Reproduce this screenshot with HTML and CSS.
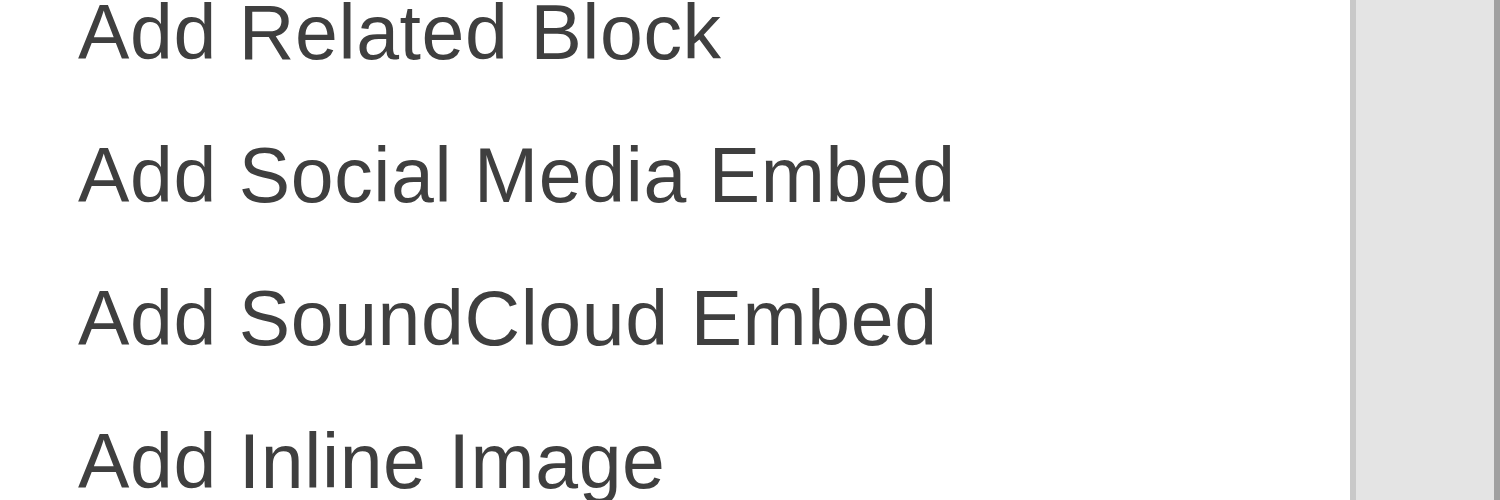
FILE: index.html
```html
<!DOCTYPE html>
<html lang="en">

<head>
    <meta charset="UTF-8">
    <meta name="viewport" content="width=device-width, initial-scale=1.0">
    <title>Insert menu</title>
    <link rel="stylesheet" href="styles.css">
</head>

<body>
    <div class="panel">
        <div class="menu">
            <ul class="menu-list">
                <li class="menu-item">Add Related Block</li>
                <li class="menu-item">Add Social Media Embed</li>
                <li class="menu-item">Add SoundCloud Embed</li>
                <li class="menu-item">Add Inline Image</li>
            </ul>
        </div>
        <div class="scrollbar"></div>
    </div>
</body>

</html>
```

FILE: styles.css
```css
html,
body {
    margin: 0;
    height: 100%;
    background: #fff;
}

.panel {
    display: flex;
    height: 500px;
    overflow: hidden;
}

.menu {
    flex: 1;
    overflow: hidden;
}

/* list is scrolled down a little, the first row sits half out of view */
.menu-list {
    list-style: none;
    margin: -39px 0 0 0;
    padding: 0 0 0 78px;
}

.menu-item {
    font-family: "Liberation Sans", Arial, sans-serif;
    font-size: 77px;
    line-height: 143px;
    letter-spacing: 0.6px;
    color: #3f3f3f;
    white-space: nowrap;
}

.scrollbar {
    width: 138px;
    background: #e4e4e4;
    border-left: 6px solid #c9c9c9;
    border-right: 6px solid #a0a0a0;
}
```
